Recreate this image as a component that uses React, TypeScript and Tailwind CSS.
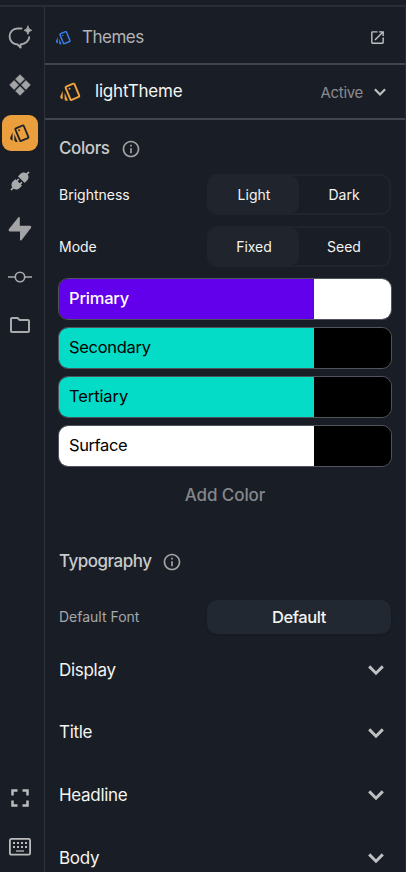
import React from "react";
import { MdOutlineStyle, MdOpenInNew, MdOutlineFolder, MdFullscreen, MdInfoOutline } from "react-icons/md";
import { AiFillApi } from "react-icons/ai";

function Chevron({ size }: { size: number }) {
  return (
    <svg width={size} height={size} viewBox="0 0 16 16" fill="none" stroke="#bfc0c2" strokeWidth="2.9">
      <path d="M1.2 4.4L8 11.2l6.8-6.8" />
    </svg>
  );
}

function AgentIcon() {
  return (
    <svg width="26" height="26" viewBox="0 0 26 26" fill="none" stroke="#a9aaaa" strokeWidth="1.9" strokeLinecap="round" strokeLinejoin="round">
      <path d="M14.500 4.500H10.500C5.800 4.500 2.600 8.200 2.600 12.500C2.600 17.200 6.300 20.300 10.600 20.500L13.600 23.500V20.500C18.600 20 22 16.800 22.200 13.200" />
      <path d="M20.900 2.200Q21.400 5.700 24.700 6.300Q21.400 6.900 20.900 10.400Q20.400 6.900 17.100 6.300Q20.400 5.700 20.900 2.200z" fill="#a9aaaa" strokeWidth="0.900" />
    </svg>
  );
}

function DiamondsIcon() {
  return (
    <svg width="22" height="22" viewBox="0 0 22 22" fill="#a3a4a5" stroke="#a3a4a5" strokeWidth="0.8" strokeLinejoin="round">
      <path d="M11 .7l4.4 4.4L11 9.500 6.600 5.100zM5.100 6.600l4.400 4.400-4.400 4.400L.7 11zM16.900 6.600l4.400 4.400-4.400 4.400-4.400-4.400zM11 12.500l4.400 4.400-4.400 4.400-4.400-4.400z" />
    </svg>
  );
}

function BoltIcon() {
  return (
    <svg width="24" height="24" viewBox="0 0 24 24" fill="#a3a4a5">
      <path d="M11.8.7v8.1h10.4q1.7.5.7 2.1L13.7 23q-1.5 1.400-1.700-.4v-8.200H1.800q-1.800-.6-.8-2.300L10.200.4q1.300-1 1.600.3z" />
    </svg>
  );
}

function CommitIcon() {
  return (
    <svg width="24" height="24" viewBox="0 0 24 24" fill="none" stroke="#a9aaab" strokeWidth="1.6">
      <circle cx="12" cy="12" r="4.7" />
      <path d="M0 12h7.300M16.700 12H24" />
    </svg>
  );
}

function KeyboardIcon() {
  return (
    <svg width="22" height="18" viewBox="0 0 22 18" fill="none" stroke="#bbbcbd" strokeWidth="1.8">
      <rect x=".9" y=".9" width="20.200" height="15.800" rx="1.500" />
      <path d="M4 5h14M4 9h14" strokeWidth="2" strokeDasharray="2 2" />
      <path d="M7 13h8" strokeWidth="1.300" />
    </svg>
  );
}

function Toggle({ left, right }: { left: string; right: string }) {
  return (
    <div className="flex h-[41px] w-[184px] rounded-[10px] border-2 border-[#20242c] text-[14px] text-[#f4f4f1]">
      <div className="flex w-[90px] items-center justify-center rounded-[8px] bg-[#20242c]">{left}</div>
      <div className="flex flex-1 items-center justify-center">{right}</div>
    </div>
  );
}

function Swatch({ name, className, side }: { name: string; className: string; side: string }) {
  return (
    <div className="flex h-[42px] w-[334px] overflow-hidden rounded-[10px] border border-[#50545d]">
      <div className={`flex w-[255px] items-center pb-px pl-[10px] text-[16.5px] ${className}`}>{name}</div>
      <div className={`flex-1 ${side}`} />
    </div>
  );
}

export default function App() {
  return (
    <div className="h-[872px] w-[406px] overflow-hidden bg-[#191d25] pt-[5px] font-['Inter',sans-serif] leading-none">
      <div className="flex h-[867px] border-t-2 border-[#2a2d35]">
        <aside className="flex w-[45px] shrink-0 flex-col justify-between border-r border-[#2f3239] pr-[5px] pt-[6px] pb-[6px] text-[#a9aaab]">
          <div className="flex flex-col items-center">
            {[
              <AgentIcon />,
              <DiamondsIcon />,
              <span className="flex size-9 items-center justify-center rounded-[9px] bg-[#ea9f3c] text-[#20222a]"><MdOutlineStyle size={22} /></span>,
              <AiFillApi size={24} />,
              <BoltIcon />,
              <CommitIcon />,
              <MdOutlineFolder size={24} />,
            ].map((icon, i) => <div key={i} className="flex h-12 items-center justify-center">{icon}</div>)}
          </div>
          <div className="flex flex-col items-center text-[#bbbcbd]">
            <div className="flex h-[60px] items-center"><MdFullscreen size={30} /></div>
            <div className="flex h-[38px] items-center"><KeyboardIcon /></div>
          </div>
        </aside>
        <main className="w-[361px] border-r border-[#2a2d35]">
          <header className="flex h-[58px] items-center border-b-2 border-[#42454c] pl-[10px] pr-[19px] pt-1">
            <MdOutlineStyle size={17} color="#3b82ee" />
            <h1 className="ml-[10px] flex-1 text-[17px] tracking-[-0.5px] text-[#b3b4b6]">Themes</h1>
            <MdOpenInNew size={17} color="#bfc0c2" />
          </header>
          <div className="flex h-[55px] items-center border-b-2 border-[#42454c] pl-[14px] pr-[19px]">
            <MdOutlineStyle size={23} color="#f2a33c" />
            <span className="ml-[13px] flex-1 text-[17px] tracking-[-0.2px] text-[#f4f4f1]">lightTheme</span>
            <span className="mr-[11px] mt-px text-[15px] tracking-[-0.3px] text-[#898b90]">Active</span>
            <Chevron size={12} />
          </div>
          <div className="pl-[14px] pr-[14px]">
            <div className="flex h-[54px] items-center gap-[11px] pt-[3px] text-[17px] font-medium tracking-[-0.4px] text-[#c9cacb]">Colors <MdInfoOutline size={20} color="#a4a4a4" /></div>
            <div className="flex items-center justify-between text-[14px] text-[#f4f4f1]">Brightness <Toggle left="Light" right="Dark" /></div>
            <div className="mt-[11px] flex items-center justify-between text-[14px] text-[#f4f4f1]">Mode <Toggle left="Fixed" right="Seed" /></div>
            <div className="-ml-px mt-[11px] flex flex-col gap-[7px]">
              <Swatch name="Primary" className="bg-[#6300eb] font-medium tracking-[-0.2px] text-white" side="bg-white" />
              <Swatch name="Secondary" className="bg-[#04dcc8] tracking-[-0.3px] text-black" side="bg-black" />
              <Swatch name="Tertiary" className="bg-[#04dcc8] tracking-[-0.1px] text-black" side="bg-black" />
              <Swatch name="Surface" className="bg-white tracking-[-0.4px] text-black" side="bg-black" />
            </div>
            <div className="flex h-[57px] items-center justify-center text-[17px] font-medium tracking-[-0.1px] text-[#85878c]">Add Color</div>
            <div className="mt-[17px] flex h-[41px] items-center gap-[10px] text-[17px] font-medium tracking-[-0.5px] text-[#c9cacb]">Typography <MdInfoOutline size={20} color="#a4a4a4" /></div>
            <div className="mt-[18px] flex items-center justify-between text-[14px] text-[#a6a8ab]">
              Default Font
              <button className="h-[34px] w-[184px] rounded-[10px] bg-[#222831] text-[16.5px] font-medium tracking-[-0.4px] text-[#f4f4f1] shadow-sm">Default</button>
            </div>
            <div className="mt-[5px]">
              {["Display", "Title", "Headline", "Body"].map((t) => (
                <div key={t} className="flex h-[62.6px] items-center justify-between pr-[7px] text-[17px] tracking-[-0.3px] text-[#f4f4f1]">{t}<Chevron size={16} /></div>
              ))}
            </div>
          </div>
        </main>
      </div>
    </div>
  );
}
